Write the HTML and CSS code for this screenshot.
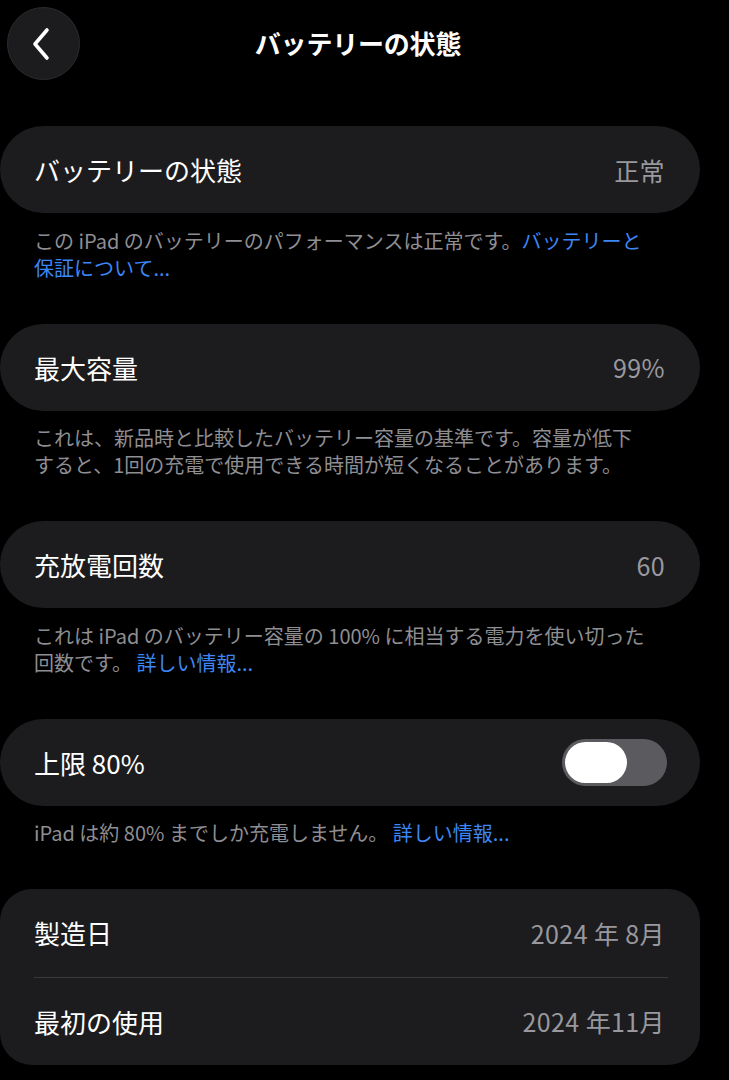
FILE: index.html
```html
<!DOCTYPE html>
<html lang="ja">
<head>
<meta charset="utf-8">
<title>バッテリーの状態</title>
<link rel="stylesheet" href="styles.css">
</head>
<body>
<div class="page">
  <header class="header">
    <button class="back" aria-label="戻る">
      <svg width="24" height="36" viewBox="0 0 24 36"><path d="M17 4 L5 18 L17 32" fill="none" stroke="#fff" stroke-width="3.6" stroke-linecap="round" stroke-linejoin="round"/></svg>
    </button>
    <h1 class="title">バッテリーの状態</h1>
  </header>
  <main class="main">
    <section class="group">
      <div class="card"><div class="row"><span class="label">バッテリーの状態</span><span class="value">正常</span></div></div>
      <p class="note">この iPad のバッテリーのパフォーマンスは正常です。<span class="link">バッテリーと<br>保証について...</span></p>
    </section>
    <section class="group">
      <div class="card"><div class="row"><span class="label">最大容量</span><span class="value">99%</span></div></div>
      <p class="note">これは、新品時と比較したバッテリー容量の基準です。容量が低下<br>すると、1回の充電で使用できる時間が短くなることがあります。</p>
    </section>
    <section class="group">
      <div class="card"><div class="row"><span class="label">充放電回数</span><span class="value">60</span></div></div>
      <p class="note">これは iPad のバッテリー容量の 100% に相当する電力を使い切った<br>回数です。 <span class="link">詳しい情報...</span></p>
    </section>
    <section class="group">
      <div class="card"><div class="row"><span class="label">上限 80%</span><span class="toggle"><span class="knob"></span></span></div></div>
      <p class="note">iPad は約 80% までしか充電しません。 <span class="link">詳しい情報...</span></p>
    </section>
    <section class="group">
      <div class="card card-list">
        <div class="row"><span class="label">製造日</span><span class="value">2024 年 8月</span></div>
        <div class="sep"></div>
        <div class="row"><span class="label">最初の使用</span><span class="value">2024 年11月</span></div>
      </div>
    </section>
  </main>
</div>
</body>
</html>
```
FILE: styles.css
```css
html, body {
  margin: 0;
  padding: 0;
  background: #000;
}
body {
  font-family: "Noto Sans CJK JP", "Noto Sans", sans-serif;
  color: #fff;
  width: 729px;
  height: 1080px;
  overflow: hidden;
}
.page {
  display: flex;
  flex-direction: column;
}
.header {
  position: relative;
  height: 80px;
  display: flex;
  align-items: center;
  justify-content: center;
  padding-right: 13px;
}
.back {
  position: absolute;
  left: 7px;
  top: 7px;
  width: 73px;
  height: 73px;
  border-radius: 50%;
  background: #1c1c1e;
  border: 1px solid #2c2c2e;
  display: flex;
  align-items: center;
  justify-content: center;
  padding: 0 4px 0 0;
  box-sizing: border-box;
}
.title {
  margin: 0;
  font-size: 26px;
  font-weight: 700;
  line-height: 1;
  padding-top: 6px;
  letter-spacing: -0.2px;
}
.main {
  margin-top: 46px;
  display: flex;
  flex-direction: column;
  gap: 43px;
}
.group {
  display: flex;
  flex-direction: column;
}
.card {
  width: 700px;
  background: #1c1c1e;
  border-radius: 44px;
}
.card-list {
  border-radius: 32px;
}
.row {
  height: 87px;
  display: flex;
  align-items: center;
  justify-content: space-between;
  padding: 0 35px 0 34px;
}
.card-list .row {
  height: 87.5px;
}
.label {
  font-size: 26px;
  color: #fff;
}
.value {
  font-size: 25px;
  color: #98989e;
  letter-spacing: 0.4px;
}
.sep {
  height: 1px;
  background: #3a3a3c;
  margin: 0 32px 0 34px;
}
.note {
  margin: 0;
  padding: 13.5px 30px 0 34px;
  font-size: 20px;
  line-height: 27px;
  color: #8e8e93;
  white-space: nowrap;
}
.link {
  color: #3d86f5;
}
.toggle {
  width: 105px;
  height: 47px;
  border-radius: 24px;
  background: #5b5b5f;
  display: flex;
  align-items: center;
  padding-left: 3px;
  box-sizing: border-box;
  margin-right: -2px;
}
.knob {
  width: 62px;
  height: 41px;
  border-radius: 21px;
  background: #fff;
}
```
